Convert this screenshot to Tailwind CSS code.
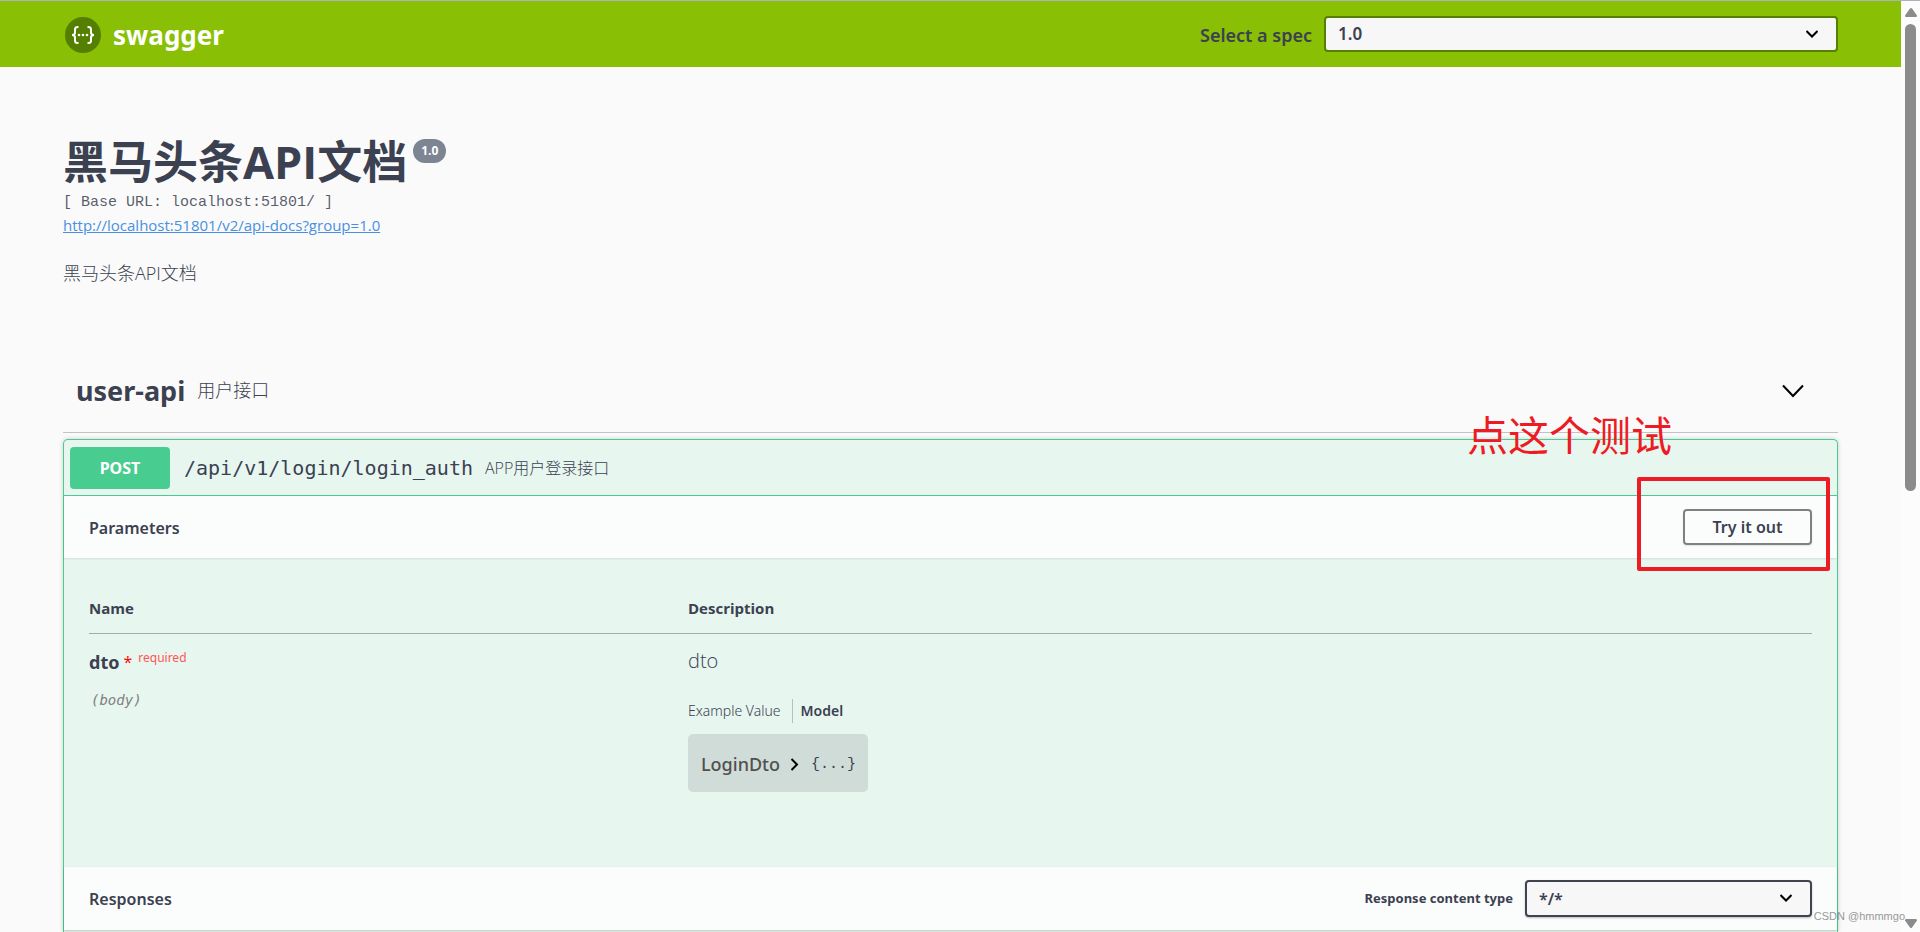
<!DOCTYPE html>
<html lang="zh-CN">
<head>
<meta charset="utf-8">
<meta name="viewport" content="width=device-width, initial-scale=1">
<title>Swagger UI</title>
<script src="https://cdn.jsdelivr.net/npm/@tailwindcss/browser@4"></script>
</head>
<body class="relative flex min-h-screen bg-[#fafafa] font-['Open_Sans','Noto_Sans_CJK_SC',sans-serif] text-[#3b4151]">
<div class="flex min-w-0 flex-1 flex-col">
  <header class="flex h-[67px] items-center justify-between border-t border-[#adb3ba] bg-[#89bf04] pr-[63px] pl-[65px]">
    <a href="#" class="flex items-center gap-3 pt-[2px] text-white">
      <svg class="size-9" viewBox="0 0 36 36" fill="none" aria-hidden="true">
        <circle cx="18" cy="18" r="18" fill="#547f00"/>
        <path d="M13.500 10H12.500Q10 10 10 12.500V15.500Q10 18 7 18Q10 18 10 20.500V23.500Q10 26 12.500 26H13.500M22.500 10H23.500Q26 10 26 12.500V15.500Q26 18 29 18Q26 18 26 20.500V23.500Q26 26 23.500 26H22.500" stroke="#fff" stroke-width="2"/>
        <circle cx="14" cy="18" r="1.300" fill="#fff"/><circle cx="18" cy="18" r="1.300" fill="#fff"/><circle cx="22" cy="18" r="1.300" fill="#fff"/>
      </svg>
      <span class="font-['Noto_Sans',sans-serif] text-[26px] font-bold">swagger</span>
    </a>
    <div class="flex items-center gap-3">
      <label for="spec" class="pt-[2px] font-['Noto_Sans',sans-serif] text-[18px] font-semibold">Select a spec</label>
      <div class="relative">
        <select id="spec" class="block h-9 w-[514px] appearance-none rounded-[4px] border-2 border-[#547f00] bg-[#f7f7f7] px-3 font-['Noto_Sans',sans-serif] text-[17px] leading-6 font-semibold"><option>1.0</option></select>
        <svg class="pointer-events-none absolute top-3 right-5 size-3" viewBox="0 0 12 12" fill="none" stroke="#000" stroke-width="2"><path d="M.5 3l5.500 5.500L11.500 3"/></svg>
      </div>
    </div>
  </header>

  <main class="flex flex-1 flex-col px-[63px]">
    <section class="pt-16">
      <div class="flex items-start gap-[6px]">
        <h1 class="text-[45px] leading-[62px] font-bold">黑马头条API文档</h1>
        <span class="mt-2 rounded-full bg-[#7d8492] px-2 text-[12px] leading-6 font-bold text-white">1.0</span>
      </div>
      <pre class="font-['Liberation_Mono',monospace] text-[15px] leading-5 text-[#3b4151]/85">[ Base URL: localhost:51801/ ]</pre>
      <a href="#" class="block w-fit text-[15px] leading-6 text-[#4990e2] underline">http://localhost:51801/v2/api-docs?group=1.0</a>
      <p class="mt-6 text-[18px] leading-6 font-light">黑马头条API文档</p>
    </section>

    <section class="mt-[72px] flex flex-1 flex-col">
      <div class="flex h-[76px] items-center border-b border-[#3b4151]/30 pr-[34px] pb-2 pl-[13px]">
        <h2 class="font-['Noto_Sans',sans-serif] text-[27px] leading-9 font-bold">user-api</h2>
        <p class="ml-3 flex-1 text-[18px] font-light">用户接口</p>
        <button type="button" aria-label="Collapse user-api"><svg class="h-[14px] w-[22px]" viewBox="0 0 22 14" fill="none" stroke="#000" stroke-width="2"><path d="M1 1.500l10 10.500L21 1.500"/></svg></button>
      </div>

      <article class="mt-[6px] flex-1 rounded-t-[5px] border border-b-0 border-[#49cc90] bg-[#e7f6ef] shadow-[0_0_4px_rgba(0,0,0,0.19)]">
        <div class="flex h-14 items-center border-b border-[#49cc90] px-[6px]">
          <span class="w-[100px] rounded-[4px] bg-[#49cc90] text-center font-['Noto_Sans',sans-serif] text-[16px] leading-[42px] font-bold text-white">POST</span>
          <a href="#" class="ml-[14px] font-['DejaVu_Sans_Mono',monospace] text-[20px]">/api/v1/login/login_auth</a>
          <p class="ml-3 text-[16px] font-light">APP用户登录接口</p>
        </div>

        <div class="flex h-[62px] items-center justify-between bg-[#fbfdfc] px-[25px] shadow-[0_1px_2px_rgba(0,0,0,0.1)]">
          <h3 class="pt-[2px] font-['Noto_Sans',sans-serif] text-[16px] font-semibold">Parameters</h3>
          <button type="button" class="h-9 w-[129px] rounded-[4px] border-2 border-[#808080] font-['Noto_Sans',sans-serif] text-[16px] leading-5 font-semibold shadow-[0_1px_2px_rgba(0,0,0,0.1)]">Try it out</button>
        </div>

        <div class="h-[309px] px-[25px] pt-[25px]">
          <table class="w-full table-fixed text-left">
            <thead>
              <tr class="h-[50px] border-b border-[#3b4151]/40 text-[15px]">
                <th scope="col" class="w-[599px] font-bold">Name</th><th scope="col" class="font-bold">Description</th>
              </tr>
            </thead>
            <tbody>
              <tr class="align-top">
                <td class="pt-4">
                  <div class="flex items-start">
                    <span class="font-['Noto_Sans',sans-serif] text-[18px] leading-6 font-bold">dto</span>
                    <span class="ml-1 text-[16px] leading-6 text-[#ff0000]">*</span>
                    <span class="ml-[6px] font-['Noto_Sans',sans-serif] text-[12px] leading-4 text-[#ff5555]">required</span>
                  </div>
                  <div class="mt-4 ml-[2px] font-['DejaVu_Sans_Mono',monospace] text-[14px] leading-5 text-[#808080] italic">(body)</div>
                </td>
                <td class="pt-[11px]">
                  <p class="text-[20px] leading-8 font-light">dto</p>
                  <div class="mt-[22px] flex h-6 items-center leading-6">
                    <button type="button" class="h-6 border-r border-[#3b4151]/30 pr-[11px] font-['Noto_Sans',sans-serif] text-[14px] font-light">Example Value</button>
                    <button type="button" class="pl-2 font-['Noto_Sans',sans-serif] text-[14px] font-semibold">Model</button>
                  </div>
                  <div class="mt-[11px] flex h-[58px] w-[180px] items-center rounded-[5px] bg-[#d0dcd7] px-[13px] pt-1">
                    <span class="font-['Noto_Sans',sans-serif] text-[18px] font-medium text-[#505050]">LoginDto</span>
                    <svg class="ml-[10px] h-[13px] w-[9px] shrink-0" viewBox="0 0 9 13" fill="none" stroke="#000" stroke-width="2"><path d="M1.500 1l5.500 5.500L1.500 12"/></svg>
                    <span class="ml-3 pt-[2px] font-['Liberation_Mono',monospace] text-[15px]">{...}</span>
                  </div>
                </td>
              </tr>
            </tbody>
          </table>
        </div>

        <div class="flex h-[63px] items-center justify-between bg-[#fbfdfc] px-[25px] shadow-[0_1px_2px_rgba(0,0,0,0.2)]">
          <h3 class="font-['Noto_Sans',sans-serif] text-[16px] font-semibold">Responses</h3>
          <div class="flex items-center gap-3">
            <label for="ctype" class="font-['Noto_Sans',sans-serif] text-[13px] font-bold">Response content type</label>
            <div class="relative">
              <select id="ctype" class="block h-[37px] w-[287px] appearance-none rounded-[4px] border-2 border-[#41444e] bg-[#f7f7f7] px-3 font-['Noto_Sans',sans-serif] text-[16px] leading-6 font-semibold shadow-[0_1px_2px_rgba(0,0,0,0.25)]"><option>*/*</option></select>
              <svg class="pointer-events-none absolute top-3 right-5 size-3" viewBox="0 0 12 12" fill="none" stroke="#000" stroke-width="2"><path d="M.5 3l5.500 5.500L11.500 3"/></svg>
            </div>
          </div>
        </div>
      </article>
    </section>
  </main>
</div>

<div class="flex w-[19px] flex-col items-center border-t border-[#adb3ba] bg-[#fcfcfc] pt-[7px] pb-1" aria-hidden="true">
  <svg class="h-[9px] w-3" viewBox="0 0 12 9" fill="#8b8b8b"><path d="M5 .5q1-1 2 0l5 7q0 1.500-1 1.500H1q-1 0-1-1.500z"/></svg>
  <div class="mt-[7px] h-[467px] w-[11px] rounded-full bg-[#8b8b8b]"></div>
  <svg class="mt-auto h-[9px] w-3" viewBox="0 0 12 9" fill="#8b8b8b"><path d="M5 8.500q1 1 2 0l5-7Q12 0 11 0H1Q0 0 0 1.500z"/></svg>
</div>

<!-- Annotations laid over the page -->
<p class="absolute top-[403px] left-[1467px] font-['Noto_Sans_CJK_SC',sans-serif] text-[41px] leading-[60px] text-[#ed1c24]">点这个测试</p>
<div class="absolute top-[477px] left-[1637px] h-[94px] w-[193px] rounded-[2px] border-4 border-[#ed1c24]"></div>
<p class="absolute right-[15px] bottom-[6px] font-['Liberation_Sans',sans-serif] text-[11px] leading-5 text-[#999]">CSDN @hmmmgo</p>
</body>
</html>
